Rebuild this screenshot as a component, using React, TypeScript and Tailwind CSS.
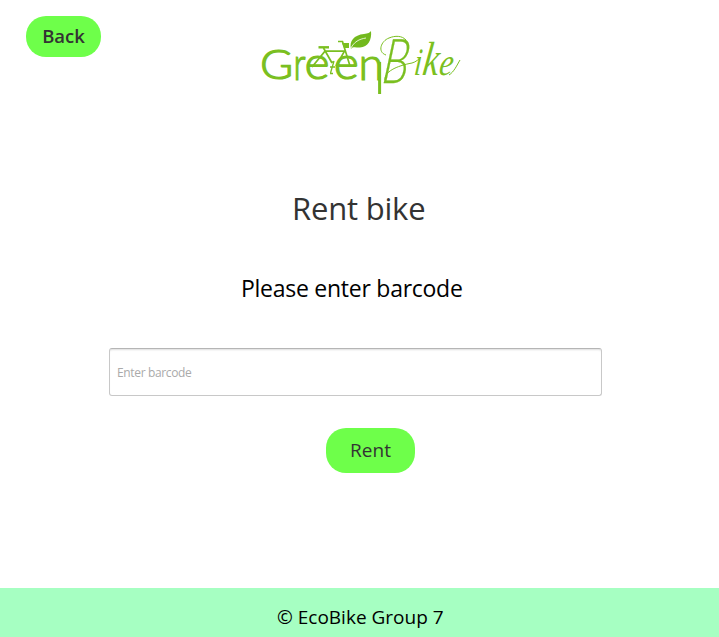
import React from "react";

function GreenBikeLogo() {
  return (
    <svg
      className="block h-[75px] w-[210px] overflow-visible"
      viewBox="255 25 210 75"
      fill="none"
      role="img"
      aria-label="GreenBike"
    >
      <g fill="#7abf20" fontFamily="Lato, sans-serif" fontWeight="300" stroke="#7abf20" strokeWidth="1.2">
        <text transform="translate(260 79.2) scale(1.09 1)" fontSize="41.5">G</text>
        <text transform="translate(293.4 79.6) scale(0.76 1)" fontSize="45">r</text>
        <text transform="translate(304.4 79) scale(1.07 1)" fontSize="45">e</text>
        <text transform="translate(333.8 79) scale(1.07 1)" fontSize="45">e</text>
        <text transform="translate(358.5 79.6) scale(1.01 1)" fontSize="45">n</text>
      </g>
      <path d="M379.6 62V94" stroke="#7abf20" strokeWidth="3" />
      {/* bicycle frame, saddle, handlebar and pedals */}
      <g stroke="#7abf20" strokeWidth="1.7">
        <path d="M312 67L325 51.2H344.5L336 66M323.5 48L332 63M338 41.5H342.5L350 66" />
        <path d="M318.5 47.3H329" strokeWidth="2.4" />
        <path d="M334 61L330.5 73M330 67H335M330 73.5H333M332 62H334" strokeWidth="1.3" />
      </g>
      <path d="M342 43h7v5h-5z" fill="#7abf20" />
      <path d="M351 49C349 41 354 35 364 34C368 33.5 370 32.5 371 31C372 40 368 47 360 47.5C357 48 353 46 351 49Z" fill="#72b91d" />
      <path d="M351 48C354 42 359 39 366 38" stroke="#fff" strokeWidth="0.8" />
      <g fill="#7abf20" fontFamily="Lato, sans-serif" fontStyle="italic" fontWeight="300">
        <text transform="translate(381 83) skewX(-7) scale(0.72 1)" fontSize="62" stroke="#7abf20" strokeWidth="0.3">B</text>
      </g>
      <g fill="#7abf20" fontFamily="Liberation Serif, serif" fontStyle="italic">
        <text transform="translate(413.5 75) skewX(-6) scale(0.68 1)" fontSize="39">i</text>
        <text transform="translate(421.5 75) skewX(-8) scale(0.75 1)" fontSize="48">k</text>
        <text transform="translate(438 75) skewX(-10) scale(0.8 1)" fontSize="38">e</text>
      </g>
      {/* calligraphic flourishes around the lettering */}
      <path d="M386 55C377 52 381 41 389 38C395 35.5 402 35.5 406 40M385 80C384 72 396 66 412 63C416 62 419 59 421 57M449 75C454 72 457 65 460 60" stroke="#7abf20" strokeWidth="1" />
    </svg>
  );
}

export default function App() {
  return (
    <div className="flex h-[637px] w-[719px] flex-col overflow-hidden bg-white font-['Open_Sans','Noto_Sans',sans-serif]">
      <header className="flex h-[100px] shrink-0 items-start pl-[26px]">
        <button className="mt-4 flex h-[41px] w-[75px] items-center justify-center rounded-[20px] bg-[#6eff4a] pb-[2px] text-[18.5px] font-semibold text-[#333]">
          Back
        </button>
        <div className="ml-[154px] mt-[25px]">
          <GreenBikeLogo />
        </div>
      </header>
      <main className="flex grow flex-col">
        <h1 className="mt-[84px] h-[48px] whitespace-nowrap pl-[292px] text-[31px] leading-[48px] font-normal tracking-[-0.2px] text-[#333]">
          Rent bike
        </h1>
        <label htmlFor="barcode" className="mt-[38px] h-[36px] whitespace-nowrap pl-[241px] text-[23px] leading-[37px] tracking-[-0.26px] text-black">
          Please enter barcode
        </label>
        <input
          id="barcode"
          placeholder="Enter barcode"
          className="ml-[109px] mt-[42px] h-[48px] w-[493px] rounded-[3px] border border-[#c8c8c8] border-t-[#b5b5b5] bg-white px-[7px] text-[12px] tracking-[-0.35px] shadow-[inset_0_2px_2px_-1px_#ddd] outline-none placeholder:text-[#aaa]"
        />
        <button className="ml-[326px] mt-8 flex h-[45px] w-[89px] items-center justify-center rounded-[20px] bg-[#6eff4a] text-[19px] text-[#333]">
          Rent
        </button>
      </main>
      <footer className="h-[49px] shrink-0 whitespace-nowrap bg-[#a6ffc2] pl-[277px] text-[19px] leading-[58px] text-black">
        © EcoBike Group 7
      </footer>
    </div>
  );
}
